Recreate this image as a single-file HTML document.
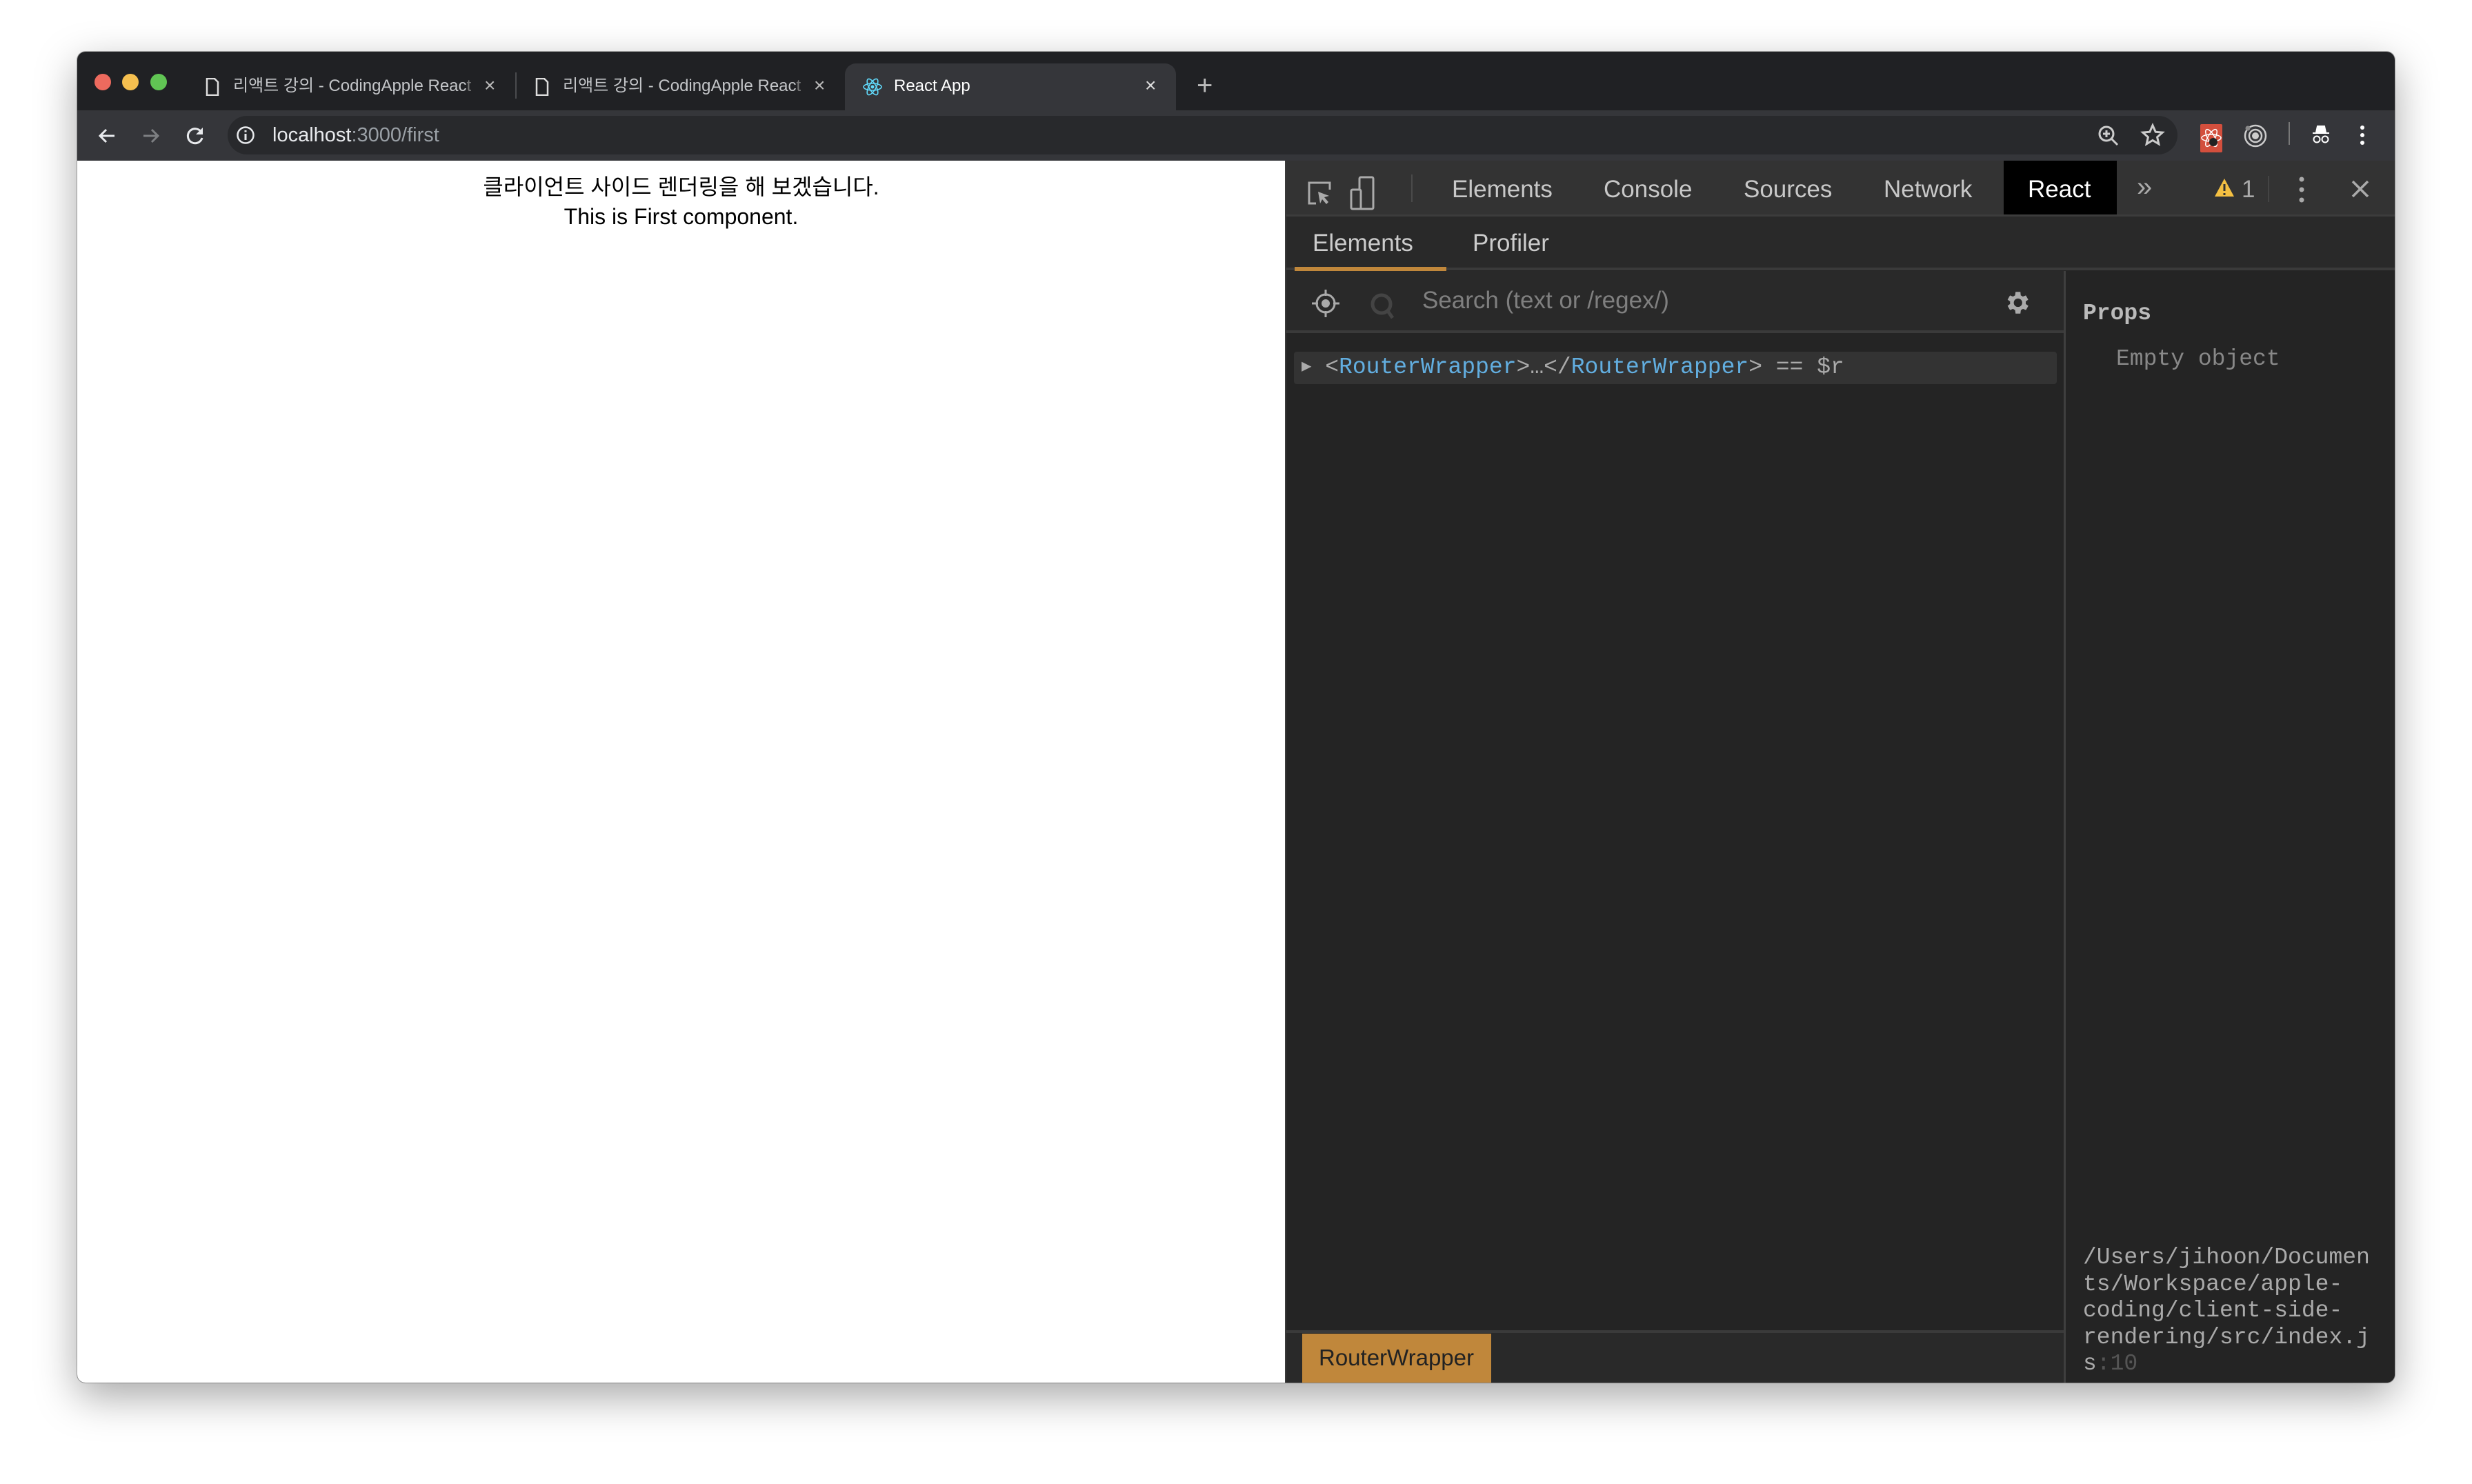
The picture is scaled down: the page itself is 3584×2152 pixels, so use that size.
<!DOCTYPE html>
<html><head><meta charset="utf-8"><style>
*{margin:0;padding:0;box-sizing:border-box}
body{width:3584px;height:2152px;background:#fff;position:relative;overflow:hidden;font-family:"Liberation Sans","Noto Sans CJK KR",sans-serif}
.win{position:absolute;left:112px;top:75px;width:3360px;height:1930px;border-radius:12px;overflow:hidden;background:#202124;box-shadow:0 20px 60px rgba(0,0,0,.35),0 0 0 1px rgba(0,0,0,.3)}
.a{position:absolute;white-space:nowrap}
.tl{position:absolute;top:32px;width:24px;height:24px;border-radius:50%}
.ttl{font-size:24px;line-height:30px;color:#c4c6c9;top:35px}
.x{font-size:28px;line-height:30px;color:#bbb;top:34px}
.tb{position:absolute;left:0;top:85px;width:3360px;height:73px;background:#35363a}
.url{position:absolute;left:218px;top:8px;width:2827px;height:56px;border-radius:28px;background:#28292c}
.page{position:absolute;left:0;top:158px;width:1751px;height:1772px;background:#fff;text-align:center;font-size:32px;line-height:43px;color:#000;padding-top:17px}
.dt{position:absolute;left:1751px;top:158px;width:1609px;height:1772px;background:#242424;border-left:2px solid #3a3a3a}
.tab{font-size:35px;color:#c8c8c8;top:22px}
.mono{font-family:"Liberation Mono","DejaVu Sans Mono",monospace}
</style></head><body>
<div class="win">
 <div class="tl" style="left:25px;background:#ed6a5e"></div>
 <div class="tl" style="left:65px;background:#f5bf4f"></div>
 <div class="tl" style="left:106px;background:#61c554"></div>
 <svg class="a" style="left:186px;top:38px" width="20" height="26" viewBox="0 0 20 26"><path d="M2 1h11l5 5v19H2z" fill="none" stroke="#ddd" stroke-width="2.5"/></svg>
 <div class="a ttl" style="left:226px">리액트 강의 - CodingApple Reac<span style="color:#777">t</span></div>
 <div class="a x" style="left:590px">×</div>
 <div class="a" style="left:635px;top:30px;width:2px;height:38px;background:#4a4b4e"></div>
 <svg class="a" style="left:664px;top:38px" width="20" height="26" viewBox="0 0 20 26"><path d="M2 1h11l5 5v19H2z" fill="none" stroke="#ddd" stroke-width="2.5"/></svg>
 <div class="a ttl" style="left:704px">리액트 강의 - CodingApple Reac<span style="color:#777">t</span></div>
 <div class="a x" style="left:1068px">×</div>
 <div class="a" style="left:1113px;top:17px;width:480px;height:70px;background:#35363a;border-radius:16px 16px 0 0"></div>
 <svg class="a" style="left:1138px;top:36px" width="30" height="30" viewBox="-15 -15 30 30"><g fill="none" stroke="#61dafb" stroke-width="1.6"><ellipse rx="13" ry="5"/><ellipse rx="13" ry="5" transform="rotate(60)"/><ellipse rx="13" ry="5" transform="rotate(120)"/></g><circle r="2.5" fill="#61dafb"/></svg>
 <div class="a ttl" style="left:1184px;color:#fff">React App</div>
 <div class="a x" style="left:1548px;color:#ddd">×</div>
 <div class="a" style="left:1623px;top:27px;font-size:40px;color:#bbb;font-weight:300">+</div>
 <div class="tb">
  <svg class="a" style="left:28px;top:22px" width="30" height="30" viewBox="0 0 30 30"><path d="M26 15H5M14 6l-9 9 9 9" fill="none" stroke="#e8eaed" stroke-width="3"/></svg>
  <svg class="a" style="left:92px;top:22px" width="30" height="30" viewBox="0 0 30 30"><path d="M4 15h21M16 6l9 9-9 9" fill="none" stroke="#7d7f82" stroke-width="3"/></svg>
  <svg class="a" style="left:156px;top:22px" width="30" height="30" viewBox="0 0 30 30"><path d="M24 10A10.5 10.5 0 1 0 25 18" fill="none" stroke="#e8eaed" stroke-width="3"/><path d="M26 3v10H16z" fill="#e8eaed"/></svg>
  <div class="url">
   <svg class="a" style="left:12px;top:14px" width="28" height="28" viewBox="0 0 28 28"><circle cx="14" cy="14" r="11.5" fill="none" stroke="#e8eaed" stroke-width="2.5"/><path d="M14 12v9M14 7v2.5" stroke="#e8eaed" stroke-width="3"/></svg>
   <div class="a" style="left:65px;top:12px;font-size:29px;color:#e8eaed">localhost<span style="color:#9aa0a6">:3000/first</span></div>
   <svg class="a" style="left:2710px;top:12px" width="34" height="34" viewBox="0 0 34 34"><circle cx="14" cy="14" r="10" fill="none" stroke="#ccc" stroke-width="3"/><path d="M21 21l9 9M14 9v10M9 14h10" stroke="#ccc" stroke-width="3"/></svg>
   <svg class="a" style="left:2773px;top:10px" width="36" height="36" viewBox="0 0 24 24"><path d="M12 2.5l2.8 6.3 6.7.6-5.1 4.5 1.5 6.6L12 17l-5.9 3.5 1.5-6.6-5.1-4.5 6.7-.6z" fill="none" stroke="#ccc" stroke-width="2"/></svg>
  </div>
  <div class="a" style="left:3078px;top:20px;width:32px;height:41px;background:#d34f3d;border-radius:2px"></div>
  <svg class="a" style="left:3078px;top:22px" width="32" height="36" viewBox="-16 -18 32 36"><g fill="none" stroke="#fff" stroke-width="1.5"><ellipse rx="14" ry="5"/><ellipse rx="14" ry="5" transform="rotate(60)"/><ellipse rx="14" ry="5" transform="rotate(120)"/></g><circle cx="3" cy="6" r="6" fill="#222"/></svg>
  <svg class="a" style="left:3138px;top:17px" width="40" height="40" viewBox="0 0 40 40"><g fill="none" stroke="#ccc" stroke-width="2.5"><circle cx="20" cy="20" r="15"/><circle cx="20" cy="20" r="9"/></g><circle cx="20" cy="20" r="5" fill="#ccc"/><circle cx="9" cy="9" r="3.5" fill="#888"/></svg>
  <div class="a" style="left:3206px;top:17px;width:2px;height:33px;background:#777"></div>
  <svg class="a" style="left:3238px;top:20px" width="30" height="30" viewBox="0 0 30 30"><path d="M3 13h24M8 12l2-9h10l2 9" fill="#fff" stroke="#fff" stroke-width="2"/><circle cx="9" cy="22" r="4.5" fill="none" stroke="#fff" stroke-width="2"/><circle cx="21" cy="22" r="4.5" fill="none" stroke="#fff" stroke-width="2"/></svg>
  <svg class="a" style="left:3308px;top:21px" width="10" height="30" viewBox="0 0 10 30"><circle cx="5" cy="4" r="3" fill="#fff"/><circle cx="5" cy="15" r="3" fill="#fff"/><circle cx="5" cy="26" r="3" fill="#fff"/></svg>
 </div>
 <div class="page">클라이언트 사이드 렌더링을 해 보겠습니다.<br>This is First component.</div>
 <div class="dt">
  <div class="a" style="left:0;top:0;width:1609px;height:80px;background:#333"></div>
  <div class="a" style="left:0;top:78px;width:1609px;height:3px;background:#3c3c3c"></div>
  <svg class="a" style="left:29px;top:28px" width="40" height="40" viewBox="0 0 40 40"><path d="M14 34H4V4h30v10" fill="none" stroke="#aaa" stroke-width="3"/><path d="M17 17l16 6-7 2 6 7-3 3-6-7-3 6z" fill="#aaa"/></svg>
  <svg class="a" style="left:92px;top:22px" width="36" height="52" viewBox="0 0 36 52"><rect x="14" y="2" width="20" height="46" rx="2" fill="none" stroke="#aaa" stroke-width="3"/><rect x="2" y="20" width="14" height="28" rx="2" fill="#333" stroke="#aaa" stroke-width="3"/></svg>
  <div class="a" style="left:181px;top:20px;width:2px;height:40px;background:#4a4a4a"></div>
  <div class="a tab" style="left:240px">Elements</div>
  <div class="a tab" style="left:460px">Console</div>
  <div class="a tab" style="left:663px">Sources</div>
  <div class="a tab" style="left:866px">Network</div>
  <div class="a" style="left:1040px;top:0;width:164px;height:78px;background:#000"></div>
  <div class="a tab" style="left:1075px;color:#fff">React</div>
  <div class="a tab" style="left:1233px;top:16px;font-size:40px;color:#aaa">»</div>
  <svg class="a" style="left:1345px;top:24px" width="30" height="30" viewBox="0 0 30 30"><path d="M15 2L29 28H1z" fill="#f4c042"/><path d="M15 10v10M15 23v3" stroke="#333" stroke-width="3"/></svg>
  <div class="a tab" style="left:1385px;color:#aaa">1</div>
  <div class="a" style="left:1423px;top:22px;width:2px;height:38px;background:#444"></div>
  <svg class="a" style="left:1467px;top:22px" width="10" height="40" viewBox="0 0 10 40"><circle cx="5" cy="5" r="3.5" fill="#aaa"/><circle cx="5" cy="20" r="3.5" fill="#aaa"/><circle cx="5" cy="35" r="3.5" fill="#aaa"/></svg>
  <svg class="a" style="left:1543px;top:27px" width="28" height="28" viewBox="0 0 28 28"><path d="M3 3l22 22M25 3L3 25" stroke="#aaa" stroke-width="3.5"/></svg>
  <div class="a" style="left:0;top:81px;width:1609px;height:78px;background:#292929"></div>
  <div class="a" style="left:0;top:155px;width:1609px;height:4px;background:#3a3a3a"></div>
  <div class="a" style="left:12px;top:154px;width:220px;height:6px;background:#c0873b"></div>
  <div class="a tab" style="left:38px;top:100px;color:#ccc">Elements</div>
  <div class="a tab" style="left:270px;top:100px;color:#ccc">Profiler</div>
  <div class="a" style="left:0;top:160px;width:1130px;height:88px;background:#292929"></div>
  <div class="a" style="left:0;top:246px;width:1130px;height:4px;background:#3a3a3a"></div>
  <svg class="a" style="left:35px;top:185px" width="44" height="44" viewBox="0 0 44 44"><circle cx="22" cy="22" r="13" fill="none" stroke="#aaa" stroke-width="3"/><circle cx="22" cy="22" r="6" fill="#aaa"/><path d="M22 2v9M22 33v9M2 22h9M33 22h9" stroke="#aaa" stroke-width="3"/></svg>
  <svg class="a" style="left:120px;top:190px" width="40" height="44" viewBox="0 0 40 44"><circle cx="18" cy="18" r="13" fill="none" stroke="#444" stroke-width="5"/><path d="M27 28l7 10" stroke="#444" stroke-width="5"/></svg>
  <div class="a" style="left:197px;top:183px;font-size:35px;color:#7f7f7f">Search (text or /regex/)</div>
  <svg class="a" style="left:1038px;top:185px" width="42" height="42" viewBox="0 0 24 24"><path fill="#aaa" d="M19.4 13a7.5 7.5 0 0 0 0-2l2.1-1.6-2-3.5-2.5 1a7.6 7.6 0 0 0-1.7-1L15 3h-4l-.4 2.9a7.6 7.6 0 0 0-1.700 1l-2.5-1-2 3.5L6.5 11a7.5 7.5 0 0 0 0 2l-2.1 1.6 2 3.5 2.5-1c.5.4 1.1.7 1.7 1L11 21h4l.4-2.9c.6-.3 1.2-.6 1.7-1l2.5 1 2-3.5zM13 15.5a3.5 3.5 0 1 1 0-7 3.5 3.5 0 0 1 0 7z"/></svg>
  <div class="a" style="left:11px;top:277px;width:1106px;height:47px;background:#333;border-radius:4px"></div>
  <div class="a mono" style="left:22px;top:281px;font-size:33px;color:#aaa"><span style="font-size:24px;position:relative;top:-3px">▶</span> &lt;<span style="color:#62aee0">RouterWrapper</span>&gt;…&lt;/<span style="color:#62aee0">RouterWrapper</span>&gt; == $r</div>
  <div class="a" style="left:0;top:1699px;width:1130px;height:73px;background:#292929"></div>
  <div class="a" style="left:0;top:1696px;width:1130px;height:4px;background:#3a3a3a"></div>
  <div class="a" style="left:23px;top:1701px;width:274px;height:71px;background:#c0873b"></div>
  <div class="a" style="left:47px;top:1717px;font-size:33px;color:#222">RouterWrapper</div>
  <div class="a" style="left:1127px;top:160px;width:3px;height:1612px;background:#3f3f3f"></div>
  <div class="a mono" style="left:1155px;top:203px;font-size:33px;font-weight:bold;color:#bbb">Props</div>
  <div class="a mono" style="left:1203px;top:269px;font-size:33px;color:#888">Empty object</div>
  <div class="a mono" style="left:1155px;top:1572px;font-size:33px;line-height:38.5px;color:#aaa">/Users/jihoon/Documen<br>ts/Workspace/apple-<br>coding/client-side-<br>rendering/src/index.j<br>s<span style="color:#555">:10</span></div>
 </div>
</div>
</body></html>
